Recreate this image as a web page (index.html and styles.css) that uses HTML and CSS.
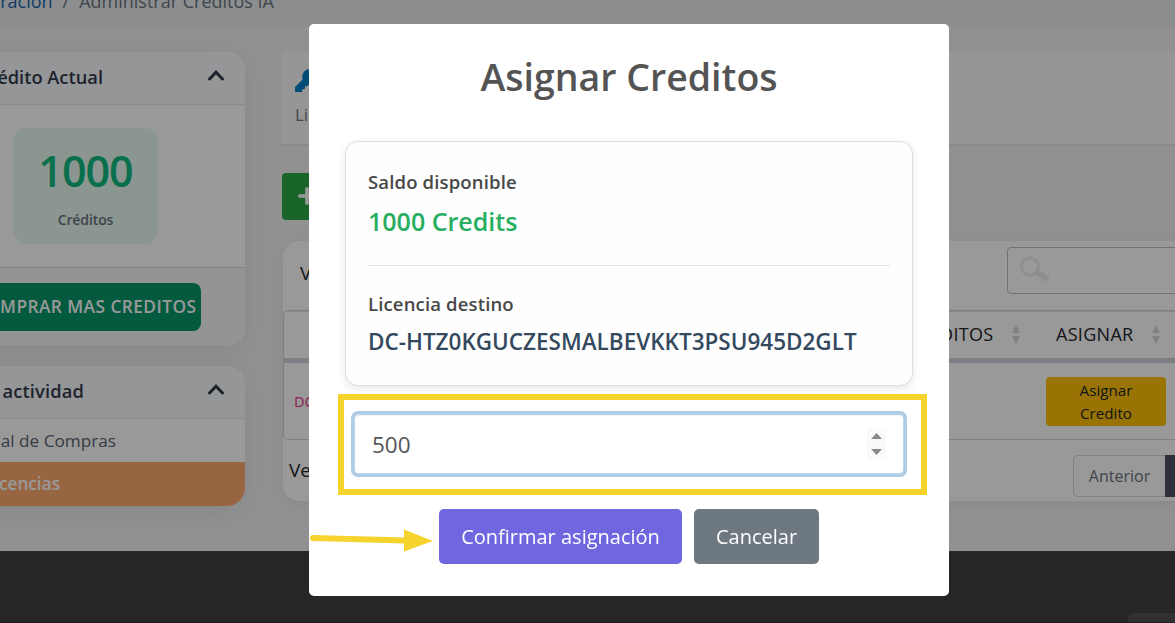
FILE: index.html
```html
<!DOCTYPE html>
<html lang="es">
<head>
<meta charset="utf-8">
<title>Administrar Créditos IA</title>
<link rel="stylesheet" href="styles.css">
</head>
<body>
<div class="page">
  <nav class="breadcrumb">
    <div class="crumbs"><a class="crumb-link">Administración</a><span class="crumb-sep">/</span><span>Administrar Créditos IA</span></div>
  </nav>
  <div class="main">
    <aside class="sidebar">
      <section class="side-card">
        <header class="side-head">
          <span class="side-title title-credit">Crédito Actual</span>
          <svg class="chevron" viewBox="0 0 16 11"><path d="M1.500 9 8 2.200 14.500 9" /></svg>
        </header>
        <div class="side-body">
          <div class="credit-box"><div class="credit-num">1000</div><div class="credit-label">Créditos</div></div>
        </div>
        <footer class="side-foot"><a class="buy-btn">COMPRAR MAS CREDITOS</a></footer>
      </section>
      <section class="side-card">
        <header class="side-head">
          <span class="side-title title-activity">Mi actividad</span>
          <svg class="chevron" viewBox="0 0 16 11"><path d="M1.500 9 8 2.200 14.500 9" /></svg>
        </header>
        <div class="side-item"><span class="item-history">Historial de Compras</span></div>
        <div class="side-item active"><span class="item-lic">Licencias</span></div>
      </section>
    </aside>
    <div class="content">
      <section class="intro">
        <svg class="key" viewBox="0 0 512 512"><path d="M512 176.001C512 273.203 433.202 352 336 352c-11.220 0-22.190-1.062-32.827-3.069l-24.012 27.014A23.999 23.999 0 0 1 261.223 384H224v40c0 13.255-10.745 24-24 24h-40v40c0 13.255-10.745 24-24 24H24c-13.255 0-24-10.745-24-24v-78.059c0-6.365 2.529-12.470 7.029-16.971l161.802-161.802C163.108 213.814 160 195.271 160 176 160 78.798 238.797.001 335.999 0 433.488-.001 512 78.511 512 176.001zM336 128c0 26.510 21.490 48 48 48s48-21.490 48-48-21.490-48-48-48-48 21.490-48 48z"/></svg>
        <p class="intro-text">Licencias</p>
      </section>
      <a class="add-btn"><svg viewBox="0 0 18 18"><path d="M9 1.800v14.400M1.800 9h14.400"/></svg></a>
      <section class="table-card">
        <div class="tools"><span class="show">Ver</span>
          <div class="search"><svg viewBox="0 0 32 28"><circle cx="11" cy="10.500" r="8.500"/><path class="handle" d="M19 16.500 27 22"/></svg></div>
        </div>
        <div class="table">
          <div class="thead">
            <span>CREDITOS</span><svg class="sort" viewBox="0 0 8 20"><path d="M0 8 4 0 8 8zM0 11H8L4 19z"/></svg>
            <span class="th-assign">ASIGNAR</span><svg class="sort" viewBox="0 0 8 20"><path d="M0 8 4 0 8 8zM0 11H8L4 19z"/></svg>
          </div>
          <div class="trow"><code class="code">DC-</code><a class="assign-btn">Asignar Credito</a></div>
        </div>
        <div class="pager-row"><span class="viewing">Ver</span><div class="pager"><span class="prev">Anterior</span><span class="current"></span></div></div>
      </section>
    </div>
  </div>
  <footer class="footer"><div class="chip"></div></footer>
</div>
<div class="overlay">
  <div class="modal">
    <h2 class="modal-title">Asignar Creditos</h2>
    <div class="info">
      <div class="label">Saldo disponible</div>
      <div class="balance">1000 Credits</div>
      <div class="rule"></div>
      <div class="label">Licencia destino</div>
      <div class="license">DC-HTZ0KGUCZESMALBEVKKT3PSU945D2GLT</div>
    </div>
    <div class="highlight">
      <div class="field"><span>500</span><svg class="spin" viewBox="0 0 19 30"><path d="M4 10 9.500 4 15 10zM4 20H15L9.500 26z"/></svg></div>
    </div>
    <div class="actions"><button class="btn confirm">Confirmar asignación</button><button class="btn cancel">Cancelar</button></div>
    <svg class="arrow" viewBox="0 0 124 24"><path class="shaft" d="M4 9 96 11.500"/><path class="tip" d="M95 0.500 124 12 95 22.500z"/></svg>
  </div>
</div>
</body>
</html>
```

FILE: styles.css
```css
* { box-sizing: border-box; }
body { margin: 0; font-family: "Open Sans", sans-serif; color: #212529; }
.page { width: 1175px; height: 623px; overflow: hidden; display: flex; flex-direction: column; background: #f2f2f2; }

.breadcrumb { height: 27px; flex: none; background: #e9ecef; }
.crumbs { width: 274px; display: flex; justify-content: flex-end; white-space: nowrap; font-size: 18px; line-height: 24px; margin-top: -11px; color: #6c757d; }
.crumb-link { color: #1864ab; }
.crumb-sep { margin: 0 10px; }

.main { height: 524px; flex: none; display: flex; gap: 37px; padding-top: 25px; }
.sidebar { flex: none; width: 319px; margin-left: -74px; display: flex; flex-direction: column; gap: 20px; }
.side-card { background: #fff; border-radius: 18px; box-shadow: 0 5px 26px rgba(0,0,0,.07); overflow: hidden; }
.side-head { height: 53px; display: flex; align-items: center; justify-content: flex-end; padding: 0 21px 2px 0; background: #f8fafd; border-bottom: 1px solid #e5e7eb; }
.side-title { font-size: 18.300px; font-weight: 600; line-height: 24px; color: #343a4b; white-space: nowrap; }
.title-credit { margin-right: 105px; }
.title-activity { margin-right: 124px; letter-spacing: .15px; }
.chevron { width: 16px; height: 11px; fill: none; stroke: #343a4b; stroke-width: 3; stroke-linecap: round; margin-top: -4px; }
.side-body { height: 162px; padding-top: 23px; display: flex; justify-content: center; align-items: flex-start; }
.credit-box { width: 145px; height: 116px; border-radius: 14px; background: #e8faf0; text-align: center; padding-top: 14px; }
.credit-num { font-size: 43px; line-height: 58px; font-weight: 600; color: #10b981; letter-spacing: -1px; }
.credit-label { font-size: 14px; line-height: 20px; font-weight: 600; color: #6b7280; margin-top: 10px; letter-spacing: -.1px; }
.side-foot { height: 79px; border-top: 1px solid #dcdcdc; background: #f7f7f7; padding-top: 15px; display: flex; justify-content: center; }
.buy-btn { width: 231px; height: 48px; border-radius: 8px; background: #059669; color: #fff; font-size: 17.300px; line-height: 47px; font-weight: 600; text-align: center; white-space: nowrap; letter-spacing: .450px; }
.side-item { height: 43px; display: flex; align-items: center; justify-content: flex-end; font-size: 17.200px; line-height: 24px; color: #5b6472; }
.side-item.active { height: 44px; background: #fda970; color: #fff; font-weight: 600; }
.item-history { margin-right: 129px; }
.item-lic { margin-right: 185px; }

.content { flex: none; width: 960px; display: flex; flex-direction: column; align-items: flex-start; }
.intro { width: 100%; height: 94px; background: #fbfbfb; border-bottom: 2px solid #e6e6e6; padding: 17px 13px; }
.key { display: block; width: 23px; height: 23px; fill: #0082c8; }
.intro-text { margin: 11px 0 0; font-size: 17px; line-height: 24px; color: #6c757d; }
.add-btn { width: 160px; height: 47px; margin-top: 27px; border-radius: 4px; background: #28a745; padding: 14px 16px; }
.add-btn svg { display: block; width: 18px; height: 18px; stroke: #fff; stroke-width: 3.600; stroke-linecap: round; }
.table-card { margin: 21px 0 0 1px; width: 958px; height: 260px; background: #fff; border-radius: 16px; box-shadow: 0 4px 18px rgba(0,0,0,.06); }
.tools { height: 69px; display: flex; justify-content: space-between; padding: 6px 0 0 17px; }
.show { font-size: 19px; line-height: 52px; }
.search { width: 234px; height: 47px; border: 1px solid #c0c0c0; border-radius: 4px; padding: 8px 11px; }
.search svg { display: block; width: 32px; height: 28px; fill: none; stroke: #ebeeed; stroke-width: 3; }
.search .handle { stroke-width: 6; stroke-linecap: round; }
.table { height: 130px; border: 1px solid #d4d4d4; border-radius: 5px; }
.thead { height: 52px; border-top: 1px solid #e4e4e4; border-bottom: 5px solid #ced4da; display: flex; align-items: center; padding: 0 0 2px 618.500px; font-size: 18px; line-height: 24px; letter-spacing: .300px; white-space: nowrap; }
.thead > span:first-child { width: 91px; display: flex; justify-content: flex-end; }
.sort { width: 8px; height: 20px; margin: 2px 0 0 18.500px; fill: #d5d5d5; }
.th-assign { margin-left: 36px; }
.trow { height: 76px; display: flex; align-items: center; padding-left: 10px; }
.code { width: 752px; font-family: "Noto Sans", sans-serif; font-size: 14.500px; color: #e83e8c; }
.assign-btn { width: 120px; height: 49px; border-radius: 4px; background: #ffc107; padding: 2px 25px; text-align: center; font-size: 15.200px; line-height: 23px; }
.pager-row { display: flex; justify-content: space-between; padding: 15px 42px 0 6px; }
.viewing { font-size: 19px; line-height: 30px; }
.pager { display: flex; width: 126px; font-size: 16px; line-height: 41px; color: #6c757d; }
.prev { width: 92px; height: 42px; border: 1px solid #d5dade; border-right: 0; border-radius: 5px 0 0 5px; text-align: center; }
.current { width: 34px; height: 42px; background: #4d5263; }

.footer { flex: 1; background: #404040; border-bottom: 1px solid #3b3137; display: flex; justify-content: flex-end; align-items: flex-end; }
.chip { width: 47px; height: 9px; border-radius: 5px 0 0 0; background: #525252; }

.overlay { position: fixed; inset: 0; background: rgba(0,0,0,.4); padding: 24px 226px 27px 309px; }
.modal { position: relative; width: 640px; height: 572px; border-radius: 5px; background: #fff; color: #545454; padding-top: 26px; display: flex; flex-direction: column; }
.modal-title { margin: 0; text-align: center; font-size: 37.500px; line-height: 54px; font-weight: 600; }
.info { margin: 37px 36px 0; height: 245px; border: 1px solid #dedede; border-radius: 13px; box-shadow: 0 3px 9px rgba(0,0,0,.09); background: #fefefe; padding: 27px 22px 0; }
.label { font-size: 18.500px; line-height: 26px; font-weight: 600; color: #484848; letter-spacing: .15px; }
.balance { margin-top: 7px; font-size: 25px; line-height: 38px; font-weight: 600; color: #27ae60; }
.rule { height: 1px; background: #e3e3e3; margin: 25px 0; }
.license { margin-top: 9px; font-size: 22.500px; line-height: 32px; font-weight: 600; color: #34495e; white-space: nowrap; }
.highlight { margin: 8px 0 0 29px; width: 589px; height: 101px; border: 6px solid #f7d32e; padding: 15px 7px 0 11px; }
.field { width: 548px; height: 58px; border-radius: 3px; box-shadow: inset 0 1px 1px rgba(0,0,0,.06), 0 0 0 1px #b9d8ec, 0 0 0 4px #b0cbe4; display: flex; align-items: center; justify-content: space-between; padding: 2px 17px 0; font-size: 22.500px; line-height: 32px; }
.spin { width: 19px; height: 30px; background: #fafafa; fill: #8a8a8a; margin-top: -2px; }
.actions { margin: 14px 0 0 130px; display: flex; gap: 12px; }
.btn { height: 55px; border: 0; border-radius: 5px; padding: 0; color: #fff; font: 20px/54px "Open Sans", sans-serif; }
.confirm { width: 243px; background: #7066e0; }
.cancel { width: 125px; background: #6e7881; }
.arrow { position: absolute; left: 0; top: 505px; width: 124px; height: 24px; }
.shaft { stroke: #f7d32e; stroke-width: 6; stroke-linecap: round; }
.tip { fill: #f7d32e; }
```
